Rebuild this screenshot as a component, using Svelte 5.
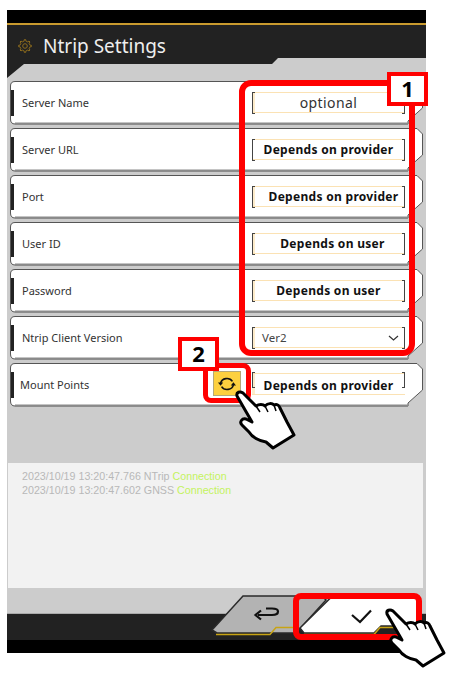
<script>
  const rows = [
    { label: 'Server Name', value: 'optional', kind: 'plain', shift: -2, tall: true },
    { label: 'Server URL', value: 'Depends on provider', kind: 'bold', shift: 0 },
    { label: 'Port', value: 'Depends on provider', kind: 'bold', shift: 10, tall: true },
    { label: 'User ID', value: 'Depends on user', kind: 'bold', shift: 8, tall: true },
    { label: 'Password', value: 'Depends on user', kind: 'bold', shift: 0, tall: true },
    { label: 'Ntrip Client Version', value: 'Ver2', kind: 'select', shift: 0, tall: true }
  ];

  const logs = [
    { text: '2023/10/19 13:20:47.766 NTrip ', status: 'Connection' },
    { text: '2023/10/19 13:20:47.602 GNSS ', status: 'Connection' }
  ];

  // cog outline, 8 teeth
  function gearPath(cx, cy, r1, r2, teeth) {
    let d = '';
    const step = (Math.PI * 2) / teeth;
    for (let i = 0; i < teeth; i++) {
      const a = i * step;
      const pts = [
        [r2, a - step * 0.5],
        [r2, a - step * 0.24],
        [r1, a - step * 0.14],
        [r1, a + step * 0.14],
        [r2, a + step * 0.24]
      ];
      for (const [r, t] of pts) {
        const x = (cx + r * Math.cos(t)).toFixed(2);
        const y = (cy + r * Math.sin(t)).toFixed(2);
        d += (d ? 'L' : 'M') + x + ' ' + y;
      }
    }
    return d + 'Z';
  }
  const gear = gearPath(7, 7, 6.4, 4.9, 8);

  const handPath =
    'M12 14C11 10 15 9 18 11L31 24C34 22 38 22 40 24C43 21 47 21 49 23C52 22 54 23 55 26L62 40L69 53L48 66L41 60C34 59 27 55 24 50L17 43C14 40 17 36 21 37L27 40Z';
</script>

{#snippet rowShape()}
  <svg class="row-shape" width="413" height="44" viewBox="0 0 413 44">
    <path class="row-fill" d="M5 .5H407L412.5 6V27L398 40V43H5Q.5 43 .5 38V5Q.5 .5 5 .5Z" />
    <path class="row-edge" d="M5 42.5H398" />
    <rect class="row-tick" x="1" y="9" width="3" height="26" />
  </svg>
{/snippet}

{#snippet hand(cls)}
  <svg class="hand {cls}" width="75" height="74" viewBox="0 0 75 74">
    <path class="hand-body" d="{handPath}" />
    <path class="hand-crease" d="M31 24L35 30M40 24L43 30M49 23L51 29" />
  </svg>
{/snippet}

<div class="page">
  <div class="screen">
    <div class="topbar"></div>
    <header class="header">
      <svg class="gear" width="14" height="14" viewBox="0 0 14 14">
        <path d={gear} />
        <circle cx="7" cy="7" r="2.3" />
      </svg>
      <h1>Ntrip Settings</h1>
    </header>

    <div class="rows">
      {#each rows as row}
        <div class="row">
          {@render rowShape()}
          <span class="label">{row.label}</span>
          <div class="box {row.tall ? 'box--focus' : ''}">
            {#if row.kind === 'select'}
              <span class="select-text">{row.value}</span>
              <svg class="chevron" width="11" height="6" viewBox="0 0 11 6">
                <path d="M1 1L5.5 5L10 1" />
              </svg>
            {:else}
              <span class={row.kind} style="padding-left: {row.shift}px">{row.value}</span>
            {/if}
          </div>
        </div>
      {/each}

      <div class="row row--mount">
        {@render rowShape()}
        <span class="label">Mount Points</span>
        <button class="sync" aria-label="Refresh">
          <svg width="18" height="14" viewBox="0 0 18 14">
            <path d="M2.6 6.2A6.4 5.8 0 0 1 14.4 4.4" />
            <path d="M15.4 7.8A6.4 5.8 0 0 1 3.6 9.6" />
            <path class="head" d="M0 5.6L5.2 5.6L2.6 8.8Z" />
            <path class="head" d="M18 8.4L12.8 8.4L15.4 5.2Z" />
          </svg>
        </button>
        <div class="box box--focus box--mount">
          <span class="bold">Depends on provider</span>
        </div>
      </div>
    </div>

    <div class="log">
      {#each logs as line}
        <div>{line.text}<span class="ok">{line.status}</span></div>
      {/each}
    </div>

    <footer class="footer">
      <svg class="actions" width="230" height="50" viewBox="200 590 230 50">
        <path class="back" d="M243 596H322L326 600L296 633H217L212 630Z" />
        <path class="gold" d="M216 634.5H270L276 627.5H296" />
        <path class="confirm" d="M332 596.5H418V626H381L374 633H304L300 628Z" />
        <path class="gold" d="M304 634.5H374L380 627.5H418" />
        <path class="icon" d="M258 615H272Q278 615 278 611.5Q278 608.5 272 608.5H266" />
        <path class="icon" d="M261 610.5L255.5 615L261 619.5" />
        <path class="icon" d="M352 615L360 622L371 610.5" />
      </svg>
    </footer>
    <div class="bottombar"></div>
  </div>

  <div class="mark mark-one"></div>
  <div class="tag tag-one">1</div>
  <div class="mark mark-two"></div>
  <div class="tag tag-two">2</div>
  <div class="mark mark-ok"></div>
  {@render hand('hand-sync')}
  {@render hand('hand-ok')}
</div>

<style>
  :global(body) {
    margin: 0;
    background: #fff;
  }

  .page {
    position: relative;
    width: 450px;
    height: 674px;
    overflow: hidden;
    padding: 10px 0 0 7px;
    box-sizing: border-box;
    font-family: "Noto Sans", sans-serif;
  }

  .screen {
    position: relative;
    width: 419px;
    height: 643px;
    background: #ccc;
    display: flex;
    flex-direction: column;
  }

  .topbar {
    height: 13px;
    background: #000;
    border-bottom: 2px solid #c99a2e;
    flex: none;
  }

  .header {
    height: 53px;
    flex: none;
    background: #222;
    clip-path: polygon(0 0, 100% 0, 100% 33px, 271px 33px, 265px 39px, 17px 39px, 0 53px);
    display: flex;
    align-items: flex-start;
    padding: 9px 0 0 11px;
    box-sizing: border-box;
  }
  .header h1 {
    margin: 0 0 0 11px;
    font-size: 19px;
    line-height: 24px;
    font-weight: 400;
    color: #eee;
  }
  .gear {
    margin-top: 5px;
  }
  .gear path,
  .gear circle {
    fill: none;
    stroke: #8d6c1e;
    stroke-width: 1;
  }

  .rows {
    display: flex;
    flex-direction: column;
    gap: 4px;
    margin: 3px 0 0 3px;
    flex: none;
  }

  .row {
    position: relative;
    width: 413px;
    height: 43px;
    display: flex;
    align-items: center;
  }
  .row-shape {
    position: absolute;
    left: 0;
    top: 0;
  }
  .row-fill {
    fill: #fff;
    stroke: #555;
    stroke-width: 1;
  }
  .row-edge {
    fill: none;
    stroke: #8a8a8a;
    stroke-width: 2;
  }
  .row-tick {
    fill: #222;
  }

  .label {
    position: relative;
    margin-left: 12px;
    font-size: 11px;
    color: #333;
    flex: 1;
  }
  .row--mount .label {
    margin-left: 10px;
  }

  .box {
    position: relative;
    width: 153px;
    height: 21px;
    margin-right: 18px;
    box-sizing: border-box;
    background: #fff;
    border-top: 1.5px solid #fbe2b4;
    border-bottom: 1.5px solid #fbe2b4;
    display: flex;
    align-items: center;
    justify-content: center;
    white-space: nowrap;
  }
  .box::before,
  .box::after {
    content: "";
    position: absolute;
    top: -1.5px;
    bottom: -1.5px;
    width: 2px;
    border: 1px solid #444;
  }
  .box::before {
    left: 0;
    border-right: none;
  }
  .box::after {
    right: 0;
    border-left: none;
  }
  .box--focus {
    box-shadow: inset 3px 0 0 #fdeccb;
  }
  .box--mount {
    margin-top: -2px;
    height: 22px;
    margin-left: 11px;
    padding-top: 3px;
  }
  .box--mount::before,
  .box--mount::after {
    bottom: 6px;
  }

  .plain {
    font-size: 14px;
    letter-spacing: 0.4px;
    color: #333;
  }
  .bold {
    font-size: 12px;
    font-weight: 700;
    letter-spacing: 0.3px;
    color: #111;
  }
  .select-text {
    flex: 1;
    padding-left: 10px;
    font-size: 11.5px;
    color: #444;
  }
  .chevron {
    margin-right: 6px;
  }
  .chevron path {
    fill: none;
    stroke: #333;
    stroke-width: 1.2;
  }

  .sync {
    position: relative;
    width: 28px;
    height: 25px;
    margin: -2px 0 0 0;
    padding: 0;
    background: #fdd03f;
    border: 1px solid #b5a878;
    box-sizing: border-box;
    display: flex;
    align-items: center;
    justify-content: center;
  }
  .sync svg path {
    fill: none;
    stroke: #111;
    stroke-width: 1.6;
  }
  .sync svg path.head {
    fill: #111;
    stroke: none;
  }

  .log {
    flex: none;
    margin: 57px 3px 0 1px;
    height: 125px;
    background: #f2f2f2;
    box-sizing: border-box;
    padding: 6px 14px;
    font-family: "Liberation Sans", sans-serif;
    font-size: 10.7px;
    line-height: 14px;
    color: #b8b8b8;
  }
  .ok {
    color: #c4f25e;
  }

  .footer {
    position: relative;
    flex: none;
    margin-top: 25px;
    height: 27px;
    background: #222;
    border-top: 1px solid #aaa;
    box-sizing: border-box;
  }
  .actions {
    position: absolute;
    left: 193px;
    top: -24px;
  }
  .back {
    fill: #b3b3b3;
    stroke: #2a2a2a;
    stroke-width: 1.5;
  }
  .confirm {
    fill: #fff;
    stroke: #2a2a2a;
    stroke-width: 1.5;
  }
  .gold {
    fill: none;
    stroke: #c8a414;
    stroke-width: 1.5;
  }
  .icon {
    fill: none;
    stroke: #111;
    stroke-width: 2.2;
  }

  .bottombar {
    height: 13px;
    flex: none;
    background: #000;
  }

  .mark {
    position: absolute;
    box-sizing: border-box;
    border: 6px solid #f00;
  }
  .mark-one {
    left: 239px;
    top: 80px;
    width: 176px;
    height: 276px;
    border-radius: 12px;
  }
  .mark-two {
    left: 203px;
    top: 363px;
    width: 48px;
    height: 40px;
    border-width: 5px;
    border-radius: 8px;
  }
  .mark-ok {
    left: 293px;
    top: 593px;
    width: 129px;
    height: 47px;
    border-radius: 8px;
  }

  .tag {
    position: absolute;
    box-sizing: border-box;
    width: 41px;
    height: 34px;
    border: 4px solid #f00;
    background: #fff;
    color: #000;
    font-size: 22px;
    font-weight: 700;
    line-height: 25px;
    text-align: center;
  }
  .tag-one {
    left: 387px;
    top: 72px;
  }
  .tag-two {
    left: 178px;
    top: 337px;
  }

  .hand {
    position: absolute;
  }
  .hand-sync {
    left: 225px;
    top: 382px;
  }
  .hand-ok {
    left: 375px;
    top: 600px;
  }
  .hand-body {
    fill: #fff;
    stroke: #000;
    stroke-width: 3;
    stroke-linejoin: round;
  }
  .hand-crease {
    fill: none;
    stroke: #000;
    stroke-width: 1.5;
  }
</style>
